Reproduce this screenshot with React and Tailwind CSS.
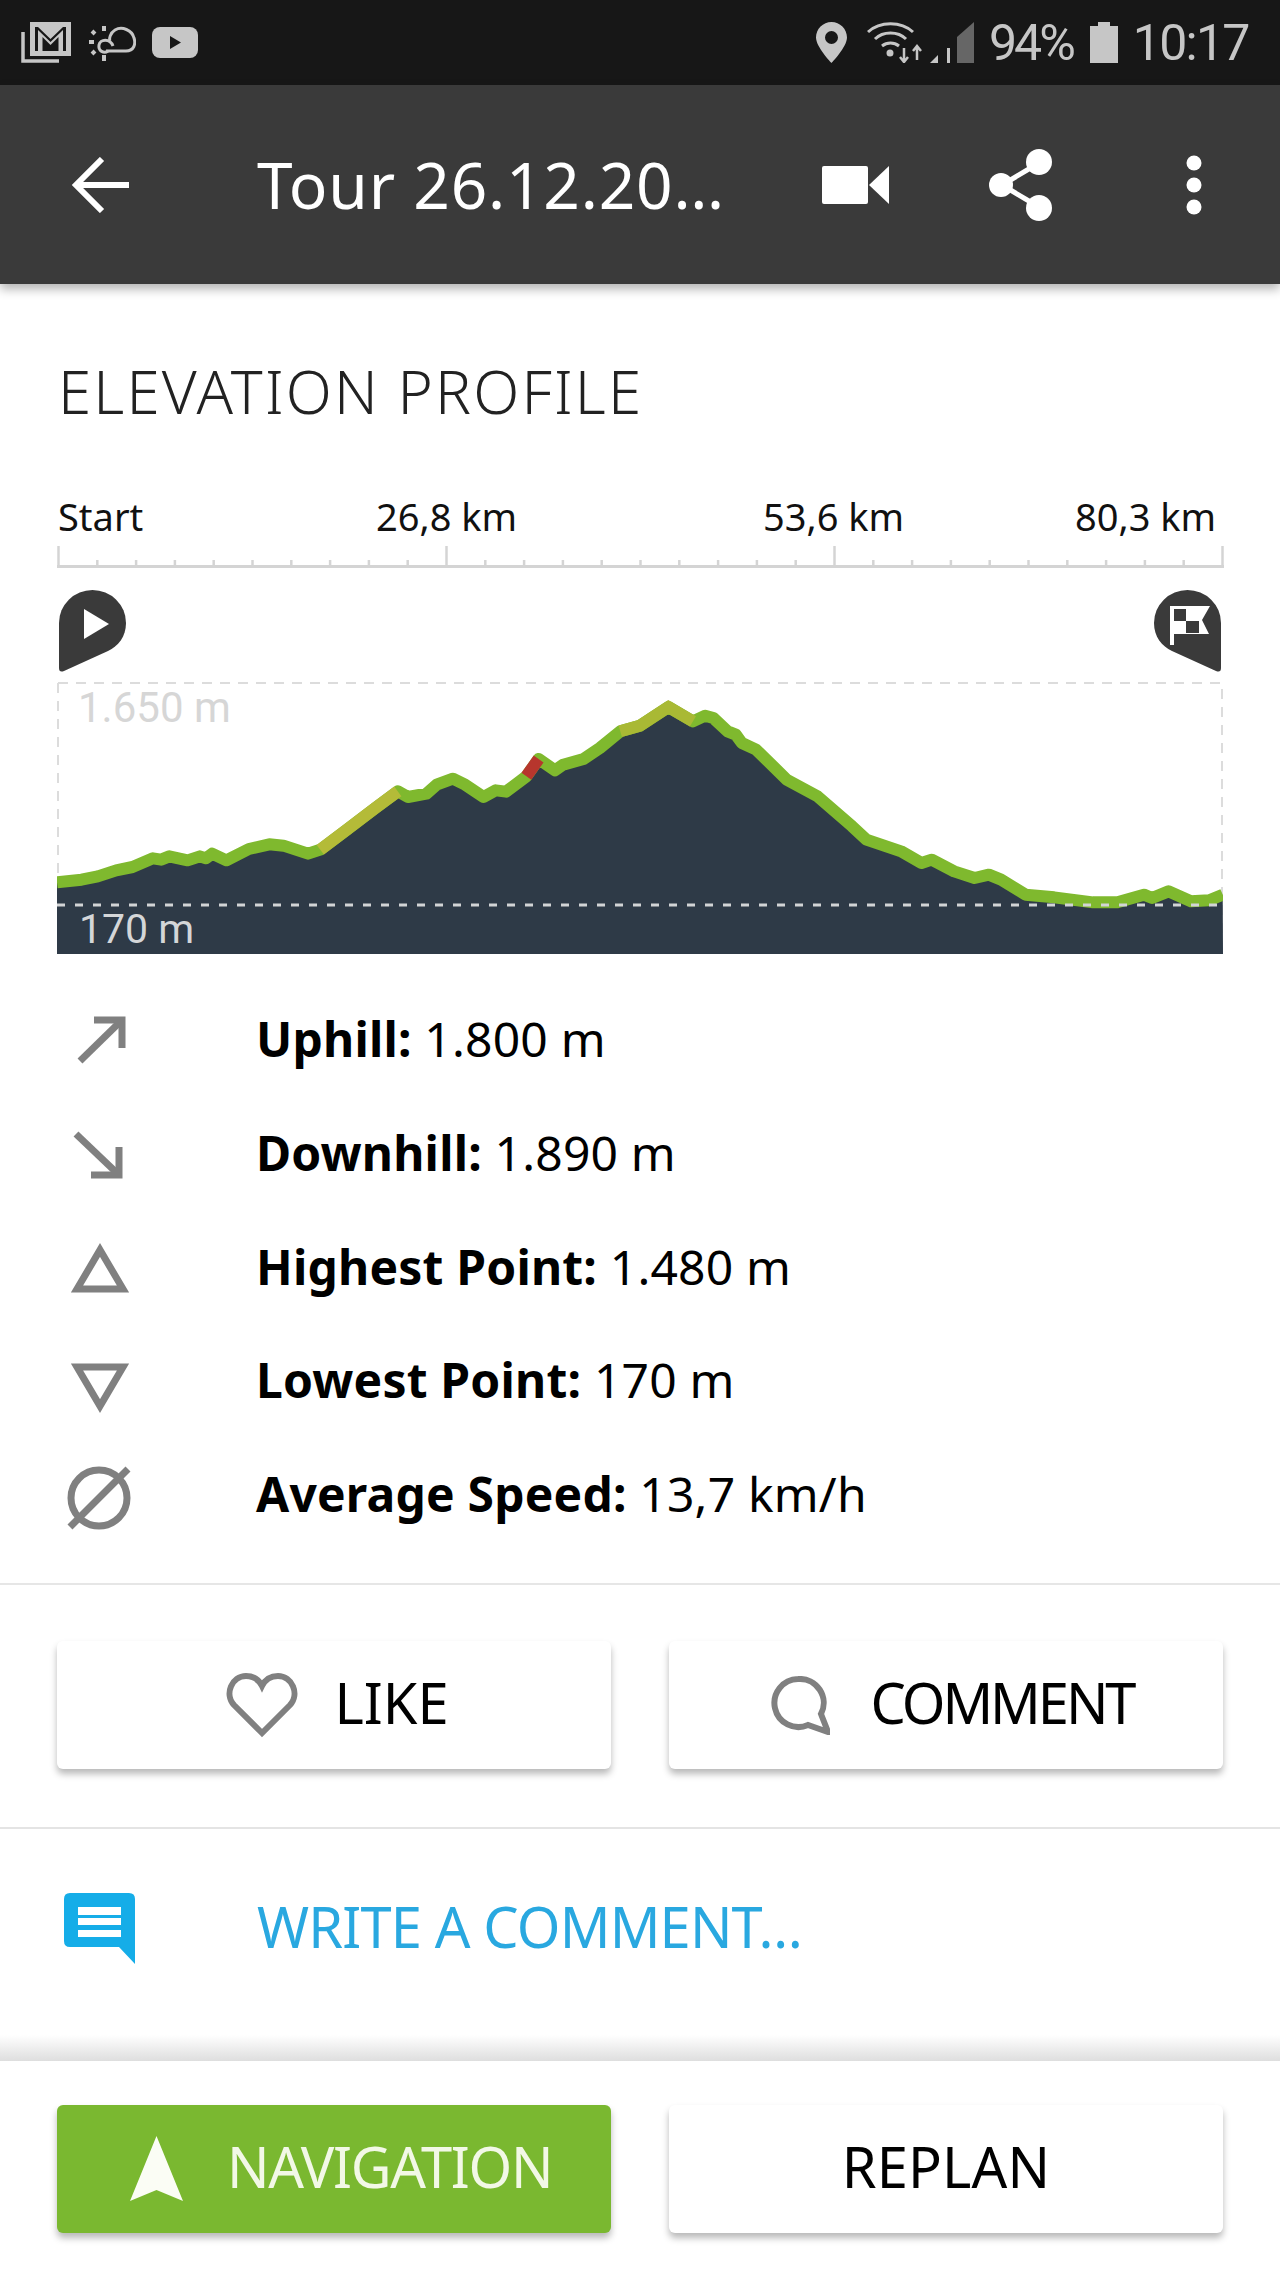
const sans = "font-['Noto_Sans',sans-serif]";

// profile line, read off the reference: [x, y] in crop units
const left = [[140,1208],[200,1200],[240,1190],[285,1172],[325,1162],[375,1136],[395,1140],[415,1130],[460,1142],[490,1130],[505,1136],[520,1122],[555,1142],[610,1108],[660,1094],[695,1098],[755,1122],[785,1110],[850,1050],[920,985],[975,935],[1000,952],[1045,942],[1070,915],[1110,897],[1140,915],[1185,952],[1215,932],[1240,936],[1290,890],[1320,838],[1360,872],[1380,855],[1430,838],[1470,805],[1520,755],[1568,738]];
const right = [[70,682],[130,725],[160,708],[180,715],[215,755],[235,765],[250,790],[285,810],[360,900],[435,950],[520,1040],[555,1080],[640,1115],[690,1150],[715,1140],[770,1175],[820,1195],[855,1185],[885,1200],[945,1245],[1015,1253],[1110,1268],[1170,1268],[1235,1245],[1255,1255],[1295,1235],[1350,1265],[1395,1262],[1428,1245]];
const px = [...left, ...right.map(([x, y]) => [x + 1568, y])].map(([x, y]) => [(x - 140) / 2.45, (y - 607) / 3]);
const line = px.map((p) => p.join(",")).join(" ");
const between = (a, b) => px.filter(([x]) => x >= a && x <= b).map((p) => p.join(",")).join(" ");

function Chart() {
  return (
    <div className="relative mt-[10px] ml-[57px] h-[272px] w-[1166px]">
      <svg width="1166" height="272" viewBox="0 0 1166 272" className="block">
        <path d="M1 1H1165V271" fill="none" stroke="#dcdcdc" strokeWidth="2" strokeDasharray="10 8" />
        <path d="M1 1V271" fill="none" stroke="#dcdcdc" strokeWidth="2" strokeDasharray="10 8" />
        <polygon points={`0,272 ${line} 1166,272`} fill="#2e3a47" />
        <polyline points={line} fill="none" stroke="#7fb92e" strokeWidth="12" strokeLinejoin="round" />
        <polyline points={between(262, 342)} fill="none" stroke="#b4bb38" strokeWidth="12" />
        <polyline points={between(342, 350)} fill="none" stroke="#c6c23c" strokeWidth="12" />
        <polyline points={between(450, 470)} fill="none" stroke="#c3bc3a" strokeWidth="12" />
        <polyline points={between(469, 482)} fill="none" stroke="#b7362d" strokeWidth="12" />
        <polyline points={between(545, 640)} fill="none" stroke="#a9b934" strokeWidth="12" />
        <path d="M0 223H1166" stroke="#d2d4d6" strokeWidth="3" strokeDasharray="8 10" />
      </svg>
      <span className="absolute left-[21px] top-[1px] font-['Roboto',sans-serif] text-[42px] leading-[50px] text-[#d6d6d6]">1.650 m</span>
      <span className="absolute left-[22px] top-[222px] font-['Roboto',sans-serif] text-[41px] leading-[50px] text-[#d4d6d8]">170 m</span>
    </div>
  );
}

function Ruler() {
  const ticks = Array.from({ length: 31 }, (_, i) => i);
  return (
    <svg width="1168" height="22" viewBox="0 0 1168 22" className="ml-[57px] mt-[4px] block">
      <path d="M0 20.5H1167" stroke="#d4d4d4" strokeWidth="3" />
      {ticks.map((i) => (
        <path key={i} d={`M${1.5 + i * 38.8} ${i % 10 === 0 ? 0 : 14}V20`} stroke="#d4d4d4" strokeWidth="2.5" />
      ))}
    </svg>
  );
}

const gray = { fill: "none", stroke: "#808080", strokeWidth: 7 };

const stats = [
  ["Uphill:", "1.800 m", <g {...gray}><path d="M20 60L62 19" /><path d="M34 19H62V47" /></g>],
  ["Downhill:", "1.890 m", <g {...gray}><path d="M16 19L59 60" /><path d="M31 60H59V32" /></g>],
  ["Highest Point:", "1.480 m", <polygon points="17,61 63,61 40,22" {...gray} />],
  ["Lowest Point:", "170 m", <polygon points="17,25 63,25 40,64" {...gray} />],
  ["Average Speed:", "13,7 km/h", <g {...gray}><circle cx="39" cy="42" r="28" /><path d="M10 71L68 13" /></g>],
];

function StatRow({ label, value, icon }) {
  return (
    <div className="flex h-[113.7px] items-center">
      <svg width="80" height="80" viewBox="0 0 80 80" className="ml-[60px] shrink-0">{icon}</svg>
      <p className="ml-[116px] pb-[3px] text-[48px] leading-[60px] tracking-[0.004em] text-black">
        <b className="font-bold">{label}</b> {value}
      </p>
    </div>
  );
}

function Card({ className = "", children }) {
  return (
    <div className={`flex h-[128px] w-[554px] items-center justify-center rounded-[6px] shadow-[0_5px_7px_rgba(0,0,0,0.28)] ${className}`}>
      {children}
    </div>
  );
}

function StatusBar() {
  return (
    <div className="flex h-[85px] items-center bg-[#171717] text-[#c6c6c6]">
      <svg width="50" height="41" viewBox="0 0 50 41" className="ml-[21px]">
        <path d="M2 10V39H38" fill="none" stroke="#c6c6c6" strokeWidth="3.500" />
        <path fillRule="evenodd" fill="#c6c6c6" d="M9 0H50V34H9ZM14 5V29H45V5H42L29.500 17L17 5Z" />
        <path d="M17 8L29.500 20L42 8V29H37.500V15L29.500 23L21.500 15V29H17Z" fill="#c6c6c6" />
      </svg>
      <svg width="50" height="38" viewBox="0 0 50 38" className="ml-[15px]" fill="none" stroke="#c6c6c6" strokeWidth="3">
        <path d="M20 27H40C48 27 50 20 48 14C46 6 36 2 29 6C24 9 23 15 24 17" />
        <path d="M27 22C24 14 14 15 13 21C12 27 18 30 22 27" />
        <path d="M18 2V7M18 31V37M3 18H8M6 7L9 10M6 30L9 27" strokeWidth="4" />
      </svg>
      <svg width="46" height="31" viewBox="0 0 46 31" className="ml-[16px]">
        <rect width="46" height="31" rx="8" fill="#c6c6c6" />
        <path d="M18 9L29 15.500L18 22Z" fill="#171717" />
      </svg>
      <svg width="31" height="41" viewBox="0 0 31 41" className="ml-[618px]">
        <path fillRule="evenodd" fill="#c6c6c6" d="M15.500 0C7 0 0 7 0 15.500C0 25 15.500 41 15.500 41S31 25 31 15.500C31 7 24 0 15.500 0ZM15.500 9A6.500 6.500 0 1 1 15.500 22A6.500 6.500 0 1 1 15.500 9Z" />
      </svg>
      <svg width="56" height="41" viewBox="0 0 56 41" className="ml-[20px]" fill="none" stroke="#c6c6c6" strokeWidth="3">
        <path d="M1 10C13 -1 34 -1 46 10" />
        <path d="M8 17C16 9 31 9 39 17" />
        <path d="M15 24C20 20 27 20 32 24" />
        <circle cx="23" cy="31" r="2" fill="#c6c6c6" />
        <path d="M37 26V40M33 35L37 40L41 35M50 38V24M46 29L50 24L54 29" strokeWidth="2.500" />
      </svg>
      <svg width="44" height="41" viewBox="0 0 44 41" className="ml-[7px]">
        <polygon points="0,41 8,33 8,41" fill="#c6c6c6" />
        <rect x="17" y="26" width="3" height="15" fill="#c6c6c6" />
        <polygon points="27,15 44,0 44,41 27,41" fill="#666666" />
      </svg>
      <span className="ml-[15px] font-['Roboto',sans-serif] text-[50px] leading-none tracking-[-0.06em]">94%</span>
      <svg width="28" height="41" viewBox="0 0 28 41" className="ml-[17px]">
        <path fill="#c6c6c6" d="M8 0H20V4H28V41H0V4H8Z" />
      </svg>
      <span className="ml-[15px] font-['Roboto',sans-serif] text-[50px] leading-none tracking-[-0.035em]">10:17</span>
    </div>
  );
}

function Toolbar() {
  return (
    <div className="relative z-10 flex h-[199px] items-center bg-[#3a3a3a] text-white shadow-[0_5px_10px_rgba(0,0,0,0.3)]">
      <svg width="58" height="56" viewBox="0 0 58 56" className="ml-[71px] shrink-0" fill="none" stroke="#fff" strokeWidth="6">
        <path d="M58 28H5" />
        <path d="M31 2L5 28L31 54" />
      </svg>
      <span className="ml-[128px] w-[464px] shrink-0 whitespace-nowrap text-[64px] leading-[80px] tracking-[0.012em]">Tour 26.12.20…</span>
      <svg width="67" height="38" viewBox="0 0 67 38" className="ml-[101px] shrink-0">
        <rect width="46" height="38" rx="2" fill="#fff" />
        <polygon points="47,19 67,0 67,38" fill="#fff" />
      </svg>
      <svg width="63" height="72" viewBox="0 0 63 72" className="ml-[100px] shrink-0">
        <path d="M50 14L13 36L50 58" fill="none" stroke="#fff" strokeWidth="5" />
        <circle cx="12" cy="36" r="12" fill="#fff" />
        <circle cx="50" cy="13" r="13" fill="#fff" />
        <circle cx="50" cy="59" r="13" fill="#fff" />
      </svg>
      <svg width="16" height="60" viewBox="0 0 16 60" className="ml-[134px] shrink-0">
        <circle cx="8" cy="8" r="7.500" fill="#fff" />
        <circle cx="8" cy="30" r="7.500" fill="#fff" />
        <circle cx="8" cy="52" r="7.500" fill="#fff" />
      </svg>
    </div>
  );
}

export default function App() {
  return (
    <div className={`flex h-[2275px] w-[1280px] flex-col overflow-hidden bg-white ${sans}`}>
      <StatusBar />
      <Toolbar />

      <h1 className="ml-[58px] mt-[68px] h-[80px] text-[60px] font-light leading-[78px] tracking-[0.036em] text-[#222]">ELEVATION PROFILE</h1>

      <div className="mt-[60px] flex h-[50px] text-[38px] leading-[48px] text-[#111]">
        <span className="ml-[58px] w-[318px]">Start</span>
        <span className="w-[138px] whitespace-nowrap text-center">26,8 km</span>
        <span className="ml-[249px] w-[138px] whitespace-nowrap text-center">53,6 km</span>
        <span className="ml-[174px] w-[138px] whitespace-nowrap text-center">80,3 km</span>
      </div>
      <Ruler />

      <div className="ml-[59px] mt-[22px] flex h-[82px] w-[1162px] justify-between">
        <svg width="68" height="82" viewBox="0 0 68 82">
          <path fill="#3a3a3a" d="M0 33A33.500 33 0 0 1 67 33C67 47 59 56 49 61L5 81Q0 83 0 78Z" />
          <polygon points="25,19 50,34 25,49" fill="#fff" />
        </svg>
        <svg width="68" height="82" viewBox="0 0 68 82">
          <path fill="#3a3a3a" d="M68 33A33.500 33 0 0 0 1 33C1 47 9 56 19 61L63 81Q68 83 68 78Z" />
          <path fill="#fff" d="M17 16H57L49 30L56 44H21V55H17Z" />
          <path fill="#3a3a3a" d="M21 19H33V31H21ZM33 31H46V43H33Z" />
        </svg>
      </div>

      <Chart />

      <div className="mt-[30px]">
        {stats.map(([label, value, icon]) => (
          <StatRow key={label} label={label} value={value} icon={icon} />
        ))}
      </div>

      <div className="mt-[31px] h-[2px] bg-[#e6e6e6]" />

      <div className="ml-[57px] mt-[56px] flex gap-[58px]">
        <Card className="bg-white">
          <svg width="72" height="66" viewBox="0 0 72 66" className="ml-[7px]" fill="none" stroke="#808080" strokeWidth="6">
            <path d="M36 61L8 33C-2 22 6 4 20 4C28 4 33 8 36 14C39 8 44 4 52 4C66 4 74 22 64 33Z" />
          </svg>
          <span className="ml-[36px] pb-[6px] text-[56px] leading-[70px] text-black">LIKE</span>
        </Card>
        <Card className="bg-white">
          <svg width="59" height="59" viewBox="0 0 59 59" className="ml-[12px]" fill="none" stroke="#808080" strokeWidth="6">
            <path d="M27 3A24 24 0 1 0 37 49L57 56L50 38A24 24 0 0 0 27 3Z" />
          </svg>
          <span className="ml-[41px] pb-[6px] text-[56px] leading-[70px] tracking-[-0.055em] text-black">COMMENT</span>
        </Card>
      </div>

      <div className="mt-[58px] h-[2px] bg-[#e4e4e4]" />

      <div className="flex h-[206px] items-start">
        <svg width="71" height="71" viewBox="0 0 71 71" className="ml-[64px] mt-[64px] shrink-0">
          <path fill="#15ade8" d="M6 0H65Q71 0 71 6V71L55 54H6Q0 54 0 48V6Q0 0 6 0Z" />
          <path fill="#fff" d="M14 14H57V22H14ZM14 25H57V32H14ZM14 37H57V44H14Z" />
        </svg>
        <span className="ml-[122px] mt-[62px] text-[56px] leading-[70px] tracking-[-0.015em] text-[#29a8e0]">WRITE A COMMENT…</span>
      </div>

      <div className="h-[26px] bg-gradient-to-b from-white to-[#dedede]" />

      <div className="ml-[57px] mt-[44px] flex gap-[58px]">
        <Card className="justify-start bg-[#7ab830]">
          <svg width="53" height="67" viewBox="0 0 53 67" className="ml-[73px] shrink-0">
            <polygon points="26.500,0 53,65 26.500,54 0,65" fill="#fbfdf5" />
          </svg>
          <span className="ml-[44px] pb-[6px] text-[56px] leading-[70px] tracking-[-0.022em] text-[#f2f8e6]">NAVIGATION</span>
        </Card>
        <Card className="bg-white">
          <span className="pb-[6px] text-[56px] leading-[70px] tracking-[0.003em] text-black">REPLAN</span>
        </Card>
      </div>
    </div>
  );
}
